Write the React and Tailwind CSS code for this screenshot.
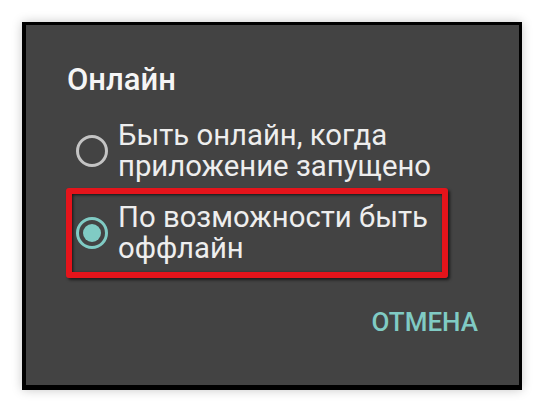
import React from "react";

function Radio({ checked }) {
  return (
    <div
      className={
        "w-[32px] h-[32px] shrink-0 rounded-full border-[3px] flex items-center justify-center " +
        (checked ? "border-[#80cbc4]" : "border-[#c4c4c4]")
      }
    >
      {checked && <div className="w-[18px] h-[18px] rounded-full bg-[#80cbc4]" />}
    </div>
  );
}

export default function App() {
  return (
    <div className="w-[544px] h-[412px] bg-white overflow-hidden font-['Roboto',sans-serif] pt-[22px] pl-[22px]">
      <div className="w-[500px] h-[368px] bg-[#434343] border-black border-l-4 border-t-[3px] border-r-[3px] border-b-[5px] shadow-[0_0_10px_rgba(0,0,0,0.22)] flex flex-col pt-[37px]">
        <div className="ml-[41px] text-[31px] leading-[36px] font-medium text-[#f5f5f5]">
          Онлайн
        </div>
        <div className="mt-[22px] ml-[50px] flex items-center gap-[10px]">
          <Radio checked={false} />
          <div className="text-[29.3px] leading-[31px] text-[#eeeeee] whitespace-nowrap">
            <div>Быть онлайн, когда</div>
            <div>приложение запущено</div>
          </div>
        </div>
        <div className="mt-[6px] ml-[40px] w-[382px] border-[6px] border-[#e5141b] rounded-[3px] shadow-[2px_2px_3px_rgba(0,0,0,0.6),inset_1px_1px_3px_rgba(0,0,0,0.7)] pl-[4px] py-[8px] flex items-center gap-[10px]">
          <Radio checked={true} />
          <div className="text-[29.3px] leading-[31px] text-[#eeeeee] whitespace-nowrap">
            <div>По возможности быть</div>
            <div>оффлайн</div>
          </div>
        </div>
        <div className="mt-[28px] mr-[41px] self-end text-[26px] leading-[32px] font-medium text-[#80cbc4]">
          ОТМЕНА
        </div>
      </div>
    </div>
  );
}
